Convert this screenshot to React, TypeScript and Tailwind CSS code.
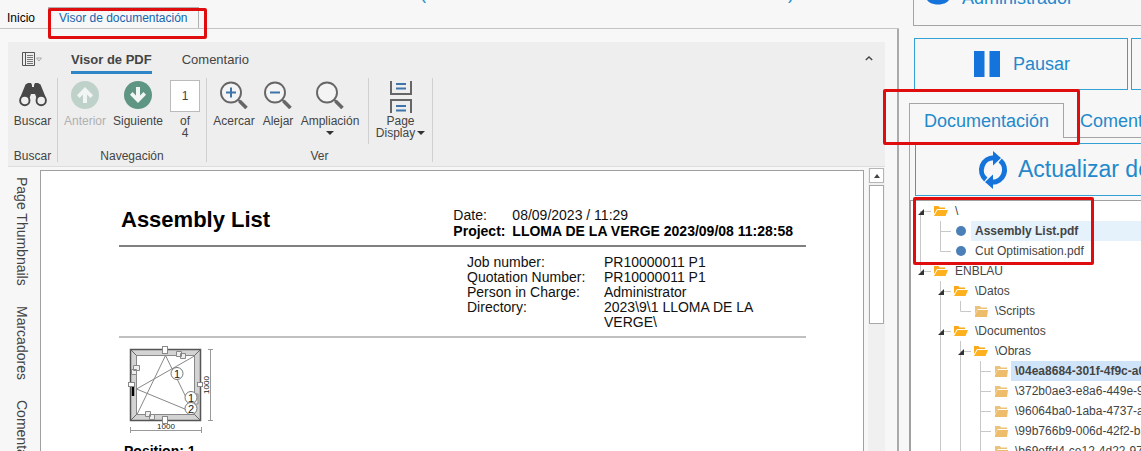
import type { ReactNode } from "react";

/* ---------- Icons ---------- */

function Binoculars() {
  return (
    <svg width="28" height="26" viewBox="0 0 28 26" className="block">
      <path
        d="M6.5 3.5 9 2h3l1 2v2h2V4l1-2h3l2.5 1.5L27 17h-9.5l-1.5-4h-4l-1.5 4H1z"
        fill="#484848"
      />
      <circle cx="5.8" cy="19.5" r="4.7" fill="#eee" stroke="#484848" strokeWidth="1.9" />
      <circle cx="22.2" cy="19.5" r="4.7" fill="#eee" stroke="#484848" strokeWidth="1.9" />
    </svg>
  );
}

function ArrowDisc({ down, color }: { down?: boolean; color: string }) {
  return (
    <svg width="28" height="28" viewBox="0 0 28 28" className="block">
      <circle cx="14" cy="14" r="14" fill={color} />
      <path
        d={
          down
            ? "M12 6h4v8.500l3.500-3.500 2.500 2.800L14 22 6 13.800l2.500-2.800L12 14.500z"
            : "M12 22h4v-8.500l3.500 3.500 2.500-2.800L14 6 6 14.200l2.500 2.800L12 13.500z"
        }
        fill="#f1f5f3"
      />
    </svg>
  );
}

function Magnifier({ sign }: { sign?: "plus" | "minus" }) {
  return (
    <svg width="28" height="28" viewBox="0 0 28 28" className="block">
      <circle cx="11" cy="11.5" r="10" fill="#f4f4f4" stroke="#666" strokeWidth="1.9" />
      <path d="M18 18.500l2 2" stroke="#666" strokeWidth="2" />
      <path d="M19.500 20l7 7" stroke="#666" strokeWidth="3.6" />
      {sign && <path d="M6 11.500h10" stroke="#3f74a8" strokeWidth="2" />}
      {sign === "plus" && <path d="M11 6.500v10" stroke="#3f74a8" strokeWidth="2" />}
    </svg>
  );
}

function PageBreak() {
  return (
    <svg width="24" height="32" viewBox="0 0 24 32" className="block" fill="none">
      <path d="M2 0v13h20V0M2 32V19h20v13" stroke="#666" strokeWidth="2" />
      <path d="M7 3h10M7 7.500h10M7 25h10M7 29.500h10" stroke="#3f74a8" strokeWidth="1.9" />
    </svg>
  );
}

function MenuSheet() {
  return (
    <svg width="20" height="14" viewBox="0 0 20 14" className="block" fill="none">
      <path d="M.5.5h12v13H.5zM3.500.5v13" stroke="#555" />
      <path d="M5 3.500h6M5 5.500h6M5 7.500h6M5 9.500h6M5 11.500h6" stroke="#777" />
      <path d="M14.500 6h5L17 9z" stroke="#999" strokeWidth=".8" />
    </svg>
  );
}

function Caret() {
  return (
    <svg width="8" height="4" viewBox="0 0 8 4" className="inline-block">
      <path d="M0 0h8L4 4z" fill="#333" />
    </svg>
  );
}

function RefreshArrows() {
  return (
    <svg width="30" height="38" viewBox="0 0 30 38" className="block">
      <g fill="none" stroke="#1474dc" strokeWidth="5">
        <path d="M7.800 28.500A12.300 12.300 0 0 1 16 6.800" />
        <path d="M22.200 9.500A12.300 12.300 0 0 1 14 31.200" />
      </g>
      <path d="M15 0l8 7-8 7.500zM15 38l-8-7 8-7.500z" fill="#1474dc" />
    </svg>
  );
}

function Folder({ pale }: { pale?: boolean }) {
  return pale ? (
    <svg width="13" height="11" viewBox="0 0 13 11" className="block">
      <path d="M0 0h5l1 1.500h6V3H3L0 8z" fill="#edc37c" />
      <path d="M2.500 4H13l-1 7H0V9z" fill="#edbd6c" />
    </svg>
  ) : (
    <svg width="14" height="10" viewBox="0 0 14 10" className="block">
      <path d="M0 0h4.500l1 1.500H11V3H3L0 8z" fill="#fba919" />
      <path d="M3.500 4H14l-2.500 6H0z" fill="#fdb11f" />
    </svg>
  );
}

/* ---------- Ribbon ---------- */

function RibbonButton({
  icon,
  label,
  width,
  muted,
  children,
}: {
  icon: ReactNode;
  label: string;
  width: string;
  muted?: boolean;
  children?: ReactNode;
}) {
  return (
    <button
      type="button"
      disabled={muted}
      className={`flex flex-col items-center pt-[3px] text-xs leading-3 ${width} ${muted ? "text-[#b0b0b0]" : "text-[#444]"}`}
    >
      <span className="flex h-[34px] items-start justify-center">{icon}</span>
      <span className="whitespace-nowrap">{label}</span>
      {children}
    </button>
  );
}

function RibbonGroup({ title, children }: { title: string; children: ReactNode }) {
  return (
    <section className="flex h-[84px] flex-col border-r border-[#d0d0d0]">
      <div className="flex h-[66px]">{children}</div>
      <h3 className="flex flex-1 items-end justify-center text-xs leading-3 text-[#444]">{title}</h3>
    </section>
  );
}

function Ribbon() {
  return (
    <div className="mr-3 ml-2 border-b border-[#ddd] bg-[#eeeeee] text-[#444]">
      <div className="flex h-9 items-start pt-[10px] text-[13px] leading-[15px]">
        <button type="button" aria-label="Menú" className="ml-[14px] w-[49px]">
          <MenuSheet />
        </button>
        <button type="button" className="border-b-[3px] border-[#2f86c6] pb-[4px] font-bold">
          Visor de PDF
        </button>
        <button type="button" className="ml-[30px]">
          Comentario
        </button>
        <button type="button" aria-label="Contraer" className="mr-3 ml-auto pt-[3px]">
          <svg width="8" height="7" viewBox="0 0 10 7" fill="none" className="block">
            <path d="M1 5.500l4-4 4 4" stroke="#444" strokeWidth="1.7" />
          </svg>
        </button>
      </div>
      <div className="flex h-[88px]">
        <RibbonGroup title="Buscar">
          <RibbonButton icon={<Binoculars />} label="Buscar" width="w-[49px]" />
        </RibbonGroup>
        <RibbonGroup title="Navegación">
          <RibbonButton icon={<ArrowDisc color="#bfd2ca" />} label="Anterior" width="w-[54px]" muted />
          <RibbonButton icon={<ArrowDisc color="#5f9683" down />} label="Siguiente" width="w-[52px]" />
          <label className="flex w-[42px] flex-col items-center pt-[2px] text-xs leading-3">
            <input
              type="text"
              defaultValue="1"
              aria-label="Página"
              className="mb-[3px] h-8 w-[30px] border border-[#bbb] bg-white text-center text-xs"
            />
            <span>of</span>
            <span>4</span>
          </label>
        </RibbonGroup>
        <RibbonGroup title="Ver">
          <RibbonButton icon={<Magnifier sign="plus" />} label="Acercar" width="w-[54px]" />
          <RibbonButton icon={<Magnifier sign="minus" />} label="Alejar" width="w-[34px]" />
          <RibbonButton icon={<Magnifier />} label="Ampliación" width="w-[70px]">
            <span className="flex h-3 items-center">
              <Caret />
            </span>
          </RibbonButton>
          <span className="ml-[3px] w-px bg-[#d0d0d0]" />
          <RibbonButton icon={<PageBreak />} label="Page" width="w-[63px]">
            <span className="flex items-center gap-[2px]">
              Display
              <Caret />
            </span>
          </RibbonButton>
        </RibbonGroup>
      </div>
    </div>
  );
}

/* ---------- Document ---------- */

function WindowDrawing() {
  return (
    <svg width="88" height="88" viewBox="0 0 88 88" className="block" fill="none">
      <rect x="2.500" y="4.500" width="70" height="71" fill="#d3d3d3" stroke="#555" strokeWidth="1.5" />
      <rect x="8.500" y="10.500" width="58" height="59" fill="#fff" stroke="#888" />
      <path d="M2.500 4.500l6 6M72.500 4.500l-6 6M2.500 75.500l6-6M72.500 75.500l-6-6" stroke="#666" />
      <path d="M9 69.500l28.500-59 29 59M66.500 11L8.500 44l58 24" stroke="#888" />
      <g fill="#fff" stroke="#888">
        <rect x="34.500" y="1.500" width="5" height="7" />
        <rect x="34.500" y="71.500" width="5" height="7" />
        <rect x=".5" y="37.500" width="6" height="4" />
        <rect x="69.500" y="37.500" width="5" height="4" />
      </g>
      <g fill="#eee" stroke="#888">
        <path d="M48.500 6.500h5v5h-5zM52.500 8.500h5v5h-5zM5.500 20.500h6v5h-6zM3.500 24.500h5v5h-5zM17.500 66.500h5v5h-5zM21.500 69.500h5v5h-5z" />
        <path d="M64 49h6v10h-6z" />
      </g>
      <g fill="#fff" stroke="#777">
        <circle cx="49" cy="28.500" r="6" />
        <circle cx="63" cy="52.500" r="6" />
        <circle cx="63" cy="63.500" r="6" />
      </g>
      <path d="M5 42v9" stroke="#000" strokeWidth="2.5" />
      <path d="M2 85.500h72M2.500 82v6M73.500 82v6M82.500 4v72M80 4.500h5M80 75.500h5" stroke="#999" />
      <g fill="#222" fontFamily="Liberation Sans, sans-serif" fontSize="11" textAnchor="middle">
        <text x="49" y="32.500">1</text>
        <text x="63" y="56.500">1</text>
        <text x="63" y="67.500">2</text>
        <text x="38" y="84" fontSize="8">1000</text>
        <text x="81" y="40" fontSize="8" transform="rotate(-90 81 40)">1000</text>
      </g>
    </svg>
  );
}

const details: [string, string][] = [
  ["Job number:", "PR10000011 P1"],
  ["Quotation Number:", "PR10000011 P1"],
  ["Person in Charge:", "Administrator"],
  ["Directory:", "2023\\9\\1 LLOMA DE LA VERGE\\"],
];

function DocumentPage() {
  return (
    <article className="min-w-0 flex-1 border border-b-0 border-[#a0a0a0] bg-white pt-9 pr-[57px] pl-[78px] text-sm text-[#111]">
      <header className="flex h-10 justify-between border-b-2 border-[#808080] pr-[13px]">
        <h1 className="ml-[2px] text-[22px] leading-[26px] font-bold text-black">Assembly List</h1>
        <dl className="grid grid-cols-[59px_auto] content-start leading-4">
          <dt>Date:</dt>
          <dd>08/09/2023 / 11:29</dd>
          <dt className="font-bold text-black">Project:</dt>
          <dd className="font-bold whitespace-nowrap text-black">LLOMA DE LA VERGE 2023/09/08 11:28:58</dd>
        </dl>
      </header>
      <div className="flex h-[91px] justify-end border-b-2 border-[#c0c0c0] pt-[8px]">
        <table className="h-fit w-[339px] table-fixed border-collapse leading-[15px]">
          <tbody>
            {details.map(([name, value]) => (
              <tr key={name} className="align-top">
                <th scope="row" className="w-[137px] p-0 text-left font-normal">
                  {name}
                </th>
                <td className="p-0 pr-10">{value}</td>
              </tr>
            ))}
          </tbody>
        </table>
      </div>
      <div className="pt-[7px] pl-[9px]">
        <WindowDrawing />
      </div>
      <h2 className="mt-[10px] ml-[5px] leading-4 font-bold text-black">Position: 1</h2>
    </article>
  );
}

function Scrollbar() {
  return (
    <div className="mr-3 ml-1 flex w-[17px] flex-col gap-[2px] bg-[#f0f0f0] px-px">
      <button
        type="button"
        aria-label="Subir"
        className="flex h-[15px] shrink-0 items-center justify-center border border-[#b5b5b5] bg-white"
      >
        <svg width="6" height="4" viewBox="0 0 6 4">
          <path d="M0 4l3-4 3 4z" fill="#444" />
        </svg>
      </button>
      <div className="h-[139px] border border-[#a8a8a8] bg-white" />
    </div>
  );
}

function Viewer() {
  return (
    <main className="flex min-w-0 flex-1 flex-col overflow-hidden">
      <header className="relative flex h-[29px] shrink-0 items-end border-b border-[#c4c4c4] text-xs">
        <p
          aria-hidden="true"
          className="absolute -top-[19px] left-[420px] flex w-[374px] justify-between text-lg leading-6 text-[#2492c8]"
        >
          <span>(</span>
          <span>)</span>
        </p>
        <button type="button" className="h-5 pr-[13px] pl-[7px] text-black">
          Inicio
        </button>
        <button
          type="button"
          className="h-[21px] border-x border-t border-[#b0b0b0] px-[10px] text-[#1465b0]"
        >
          Visor de documentación
        </button>
      </header>
      <div className="flex min-h-0 flex-1 flex-col border-r-2 border-[#aaa] pt-[13px]">
        <Ribbon />
        <div className="flex min-h-0 flex-1 pt-px">
          <nav className="flex w-8 shrink-0 gap-5 pt-[9px] text-sm leading-5 text-[#444] [writing-mode:vertical-rl]">
            <button type="button" className="w-5 whitespace-nowrap">Page Thumbnails</button>
            <button type="button" className="w-5 whitespace-nowrap">Marcadores</button>
            <button type="button" className="w-5 whitespace-nowrap">Comentarios</button>
          </nav>
          <div className="ml-2 flex min-w-0 flex-1 pt-[2px]">
            <DocumentPage />
          </div>
          <Scrollbar />
        </div>
      </div>
    </main>
  );
}

/* ---------- Side panel ---------- */

type Guide = "blank" | "line" | "tee" | "end" | "first" | "open" | "last";
type Row = {
  text: string;
  guides: Guide[];
  icon: "folder" | "leaf" | "dot";
  highlight?: "light" | "strong";
};

const rows: Row[] = [
  { text: "\\", guides: ["first"], icon: "folder" },
  { text: "Assembly List.pdf", guides: ["line", "tee"], icon: "dot", highlight: "light" },
  { text: "Cut Optimisation.pdf", guides: ["line", "end"], icon: "dot" },
  { text: "ENBLAU", guides: ["last"], icon: "folder" },
  { text: "\\Datos", guides: ["blank", "open"], icon: "folder" },
  { text: "\\Scripts", guides: ["blank", "line", "end"], icon: "leaf" },
  { text: "\\Documentos", guides: ["blank", "open"], icon: "folder" },
  { text: "\\Obras", guides: ["blank", "line", "open"], icon: "folder" },
  {
    text: "\\04ea8684-301f-4f9c-a0d2",
    guides: ["blank", "line", "line", "tee"],
    icon: "leaf",
    highlight: "strong",
  },
  { text: "\\372b0ae3-e8a6-449e-9c41", guides: ["blank", "line", "line", "tee"], icon: "leaf" },
  { text: "\\96064ba0-1aba-4737-a8f5", guides: ["blank", "line", "line", "tee"], icon: "leaf" },
  { text: "\\99b766b9-006d-42f2-b3e7", guides: ["blank", "line", "line", "tee"], icon: "leaf" },
  { text: "\\b69effd4-ce12-4d22-97a1", guides: ["blank", "line", "line", "tee"], icon: "leaf" },
];

const guidePaths: Record<Guide, string> = {
  blank: "",
  line: "M9.500 0v20",
  tee: "M9.500 0v20M9.500 10.500H20",
  end: "M9.500 0v10.500H20",
  first: "M9.500 10v10M9.500 10.500H20",
  open: "M9.500 0v20M9.500 10.500H20",
  last: "M9.500 0v10.500H20",
};

function GuideCell({ kind }: { kind: Guide }) {
  const expandable = kind === "first" || kind === "open" || kind === "last";
  return (
    <svg width="20" height="20" viewBox="0 0 20 20" className="block shrink-0" fill="none">
      <path d={guidePaths[kind]} stroke="#c8c8c8" />
      {expandable && <path d="M13 8v6H7z" fill="#333" />}
    </svg>
  );
}

function TreeRow({ text, guides, icon, highlight }: Row) {
  const tone =
    highlight === "light"
      ? "bg-[#e5f1fb] font-bold"
      : highlight === "strong"
        ? "bg-[#cfe4f9] font-bold"
        : "";
  return (
    <li className="flex h-5 items-center">
      {guides.map((kind, i) => (
        <GuideCell key={i} kind={kind} />
      ))}
      <span className="flex w-5 shrink-0 items-center justify-center">
        {icon === "dot" ? (
          <span className="size-[10px] rounded-full bg-[#4a7fb8]" />
        ) : (
          <Folder pale={icon === "leaf"} />
        )}
      </span>
      <span className={`h-5 flex-1 pl-1 leading-5 whitespace-nowrap ${tone}`}>{text}</span>
    </li>
  );
}

function SidePanel() {
  return (
    <aside className="flex w-[242px] shrink-0 flex-col overflow-hidden pl-[10px] text-lg text-[#2389cb]">
      <div className="ml-1 flex h-[26px] shrink-0 items-end border-b border-l border-[#a5a5a5] pb-[15px]">
        <svg width="22" height="30" viewBox="0 0 22 30" className="mr-[13px] mb-[5px] ml-[13px] block shrink-0">
          <circle cx="11" cy="6" r="6" fill="#1474dc" />
          <path d="M0 20c0-9 22-9 22 0v5c-4 6-18 6-22 0z" fill="#1474dc" />
        </svg>
        <span className="leading-6">Administrador</span>
      </div>
      <div className="mt-3 ml-[5px] flex h-[52px] shrink-0 gap-[3px]">
        <button
          type="button"
          className="flex w-[214px] shrink-0 items-center justify-center gap-[13px] border border-[#35a0d4] pl-[2px]"
        >
          <svg width="26" height="26" viewBox="0 0 26 26" className="block">
            <path d="M0 0h10.500v26H0zM15.500 0H26v26H15.500z" fill="#1474dc" />
          </svg>
          Pausar
        </button>
        <button type="button" aria-label="Finalizar" className="w-[214px] shrink-0 border border-[#35a0d4]" />
      </div>
      <div className="mt-[13px] flex h-[35px] shrink-0">
        <button type="button" className="w-[155px] shrink-0 border-x border-t border-[#a5a5a5]">
          Documentación
        </button>
        <button type="button" className="shrink-0 border-b border-[#a5a5a5] px-4 pt-[2px]">
          Comentarios
        </button>
      </div>
      <div className="h-[62px] shrink-0 border-l border-[#a5a5a5] pt-[5px] pl-[5px]">
        <button
          type="button"
          className="flex h-[53px] w-[410px] items-center gap-[10px] border border-[#35a0d4] pl-[62px] text-[23px] whitespace-nowrap"
        >
          <RefreshArrows />
          Actualizar documentación
        </button>
      </div>
      <ul className="min-h-0 flex-1 overflow-hidden border-t border-l-2 border-[#a0a0a0] bg-white text-xs text-[#444]">
        {rows.map((row) => (
          <TreeRow key={row.text} {...row} />
        ))}
      </ul>
    </aside>
  );
}

export default function App() {
  return (
    <div className="relative flex h-screen overflow-hidden bg-[#f7f7f7] font-['Liberation_Sans',Arial,sans-serif]">
      <Viewer />
      <SidePanel />
      <div className="pointer-events-none absolute top-2 left-12 h-[31px] w-[159px] rounded-[2px] border-[3px] border-[#df0d0d]" />
      <div className="pointer-events-none absolute top-[89px] right-[61px] h-14 w-[197px] rounded-[2px] border-[3px] border-[#df0d0d]" />
      <div className="pointer-events-none absolute top-[197px] right-[47px] h-[68px] w-[181px] rounded-[2px] border-[3px] border-[#df0d0d]" />
    </div>
  );
}
